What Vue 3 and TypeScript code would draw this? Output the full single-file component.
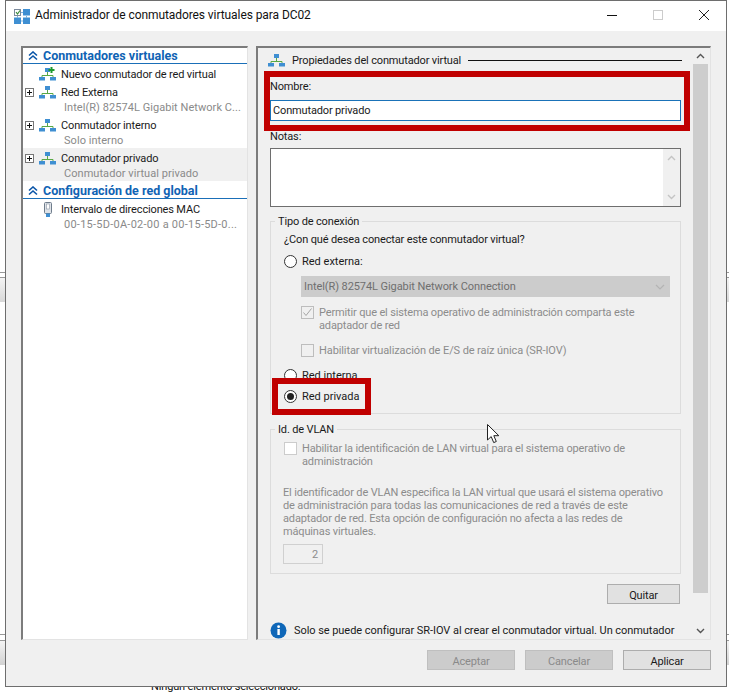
<script setup lang="ts">
interface Row {
  title: string
  sub?: string
  icon: 'new' | 'net' | 'mac'
  expand?: boolean
  selected?: boolean
}
const switches: Row[] = [
  { title: 'Nuevo conmutador de red virtual', icon: 'new' },
  { title: 'Red Externa', sub: 'Intel(R) 82574L Gigabit Network C...', icon: 'net', expand: true },
  { title: 'Conmutador interno', sub: 'Solo interno', icon: 'net', expand: true },
  { title: 'Conmutador privado', sub: 'Conmutador virtual privado', icon: 'net', expand: true, selected: true },
]
const globals: Row[] = [
  { title: 'Intervalo de direcciones MAC', sub: '00-15-5D-0A-02-00 a 00-15-5D-0...', icon: 'mac' },
]
const sections = [
  { name: 'Conmutadores virtuales', rows: switches },
  { name: 'Configuración de red global', rows: globals },
]
</script>

<template>
  <div class="page">
    <div class="behind left top-bar"></div>
    <div class="behind left bottom-bar"></div>
    <div class="behind right top-bar"></div>
    <div class="behind right bottom-bar"></div>
    <div class="behind-text">Ningún elemento seleccionado.</div>

    <div class="window">
      <header class="titlebar">
        <svg class="app-icon" width="16" height="15" viewBox="0 0 16 15">
          <rect x="0.5" y="0.5" width="6" height="6" fill="#fff" stroke="#7b8a9c" />
          <path d="M2 3l1.500 2L6 1.500" fill="none" stroke="#3c8a3c" stroke-width="1.200" />
          <rect x="9" y="0" width="7" height="6.500" fill="#3f8fd2" />
          <rect x="0" y="8.500" width="7" height="6.500" fill="#3f8fd2" />
          <rect x="9" y="8.500" width="7" height="6.500" fill="#3f8fd2" />
          <path d="M7 3.500h2M3.500 7v2M12.500 7v2M7 12h2" stroke="#7db4e0" />
        </svg>
        <span class="title">Administrador de conmutadores virtuales para DC02</span>
        <div class="controls">
          <svg width="12" height="12" viewBox="0 0 12 12"><path d="M1 6.500h10" stroke="#111" /></svg>
          <svg width="12" height="12" viewBox="0 0 12 12"><rect x="1.500" y="1.500" width="9" height="9" fill="none" stroke="#ccc" /></svg>
          <svg width="12" height="12" viewBox="0 0 12 12"><path d="M1 1l10 10M11 1L1 11" stroke="#222" /></svg>
        </div>
      </header>

      <div class="body">
        <div class="panes">
          <nav class="tree">
            <section v-for="s in sections" :key="s.name" class="tree-section">
              <h3 class="tree-head">
                <svg width="10" height="10" viewBox="0 0 10 10">
                  <path d="M1 4.500L5 1l4 3.500M1 8.500L5 5l4 3.500" fill="none" stroke="#0a55a8" stroke-width="1.600" />
                </svg>
                {{ s.name }}
              </h3>
              <div v-for="r in s.rows" :key="r.title" class="row" :class="{ selected: r.selected, single: !r.sub }">
                <div class="row-main">
                  <span class="expander">
                    <svg v-if="r.expand" width="9" height="9" viewBox="0 0 9 9">
                      <rect x="0.500" y="0.500" width="8" height="8" fill="#fff" stroke="#777" />
                      <path d="M2 4.500h5M4.500 2v5" stroke="#111" />
                    </svg>
                  </span>
                  <svg v-if="r.icon !== 'mac'" class="row-icon" width="17" height="14" viewBox="0 0 17 14">
                    <rect x="6" y="1" width="5" height="4" fill="#3f8fd2" />
                    <path d="M8.500 5v3M3 11V8.500h11V11" fill="none" stroke="#5aa845" />
                    <rect x="0" y="10" width="6" height="3.500" fill="#3f8fd2" />
                    <rect x="11" y="10" width="6" height="3.500" fill="#3f8fd2" />
                    <path v-if="r.icon === 'new'" d="M12.500 0v6M9.500 3h6" stroke="#1f9a2f" stroke-width="2" />
                  </svg>
                  <svg v-else class="row-icon" width="17" height="15" viewBox="0 0 17 15">
                    <rect x="5.500" y="0.500" width="7" height="11" rx="1" fill="#dfe3e8" stroke="#6f7d8c" />
                    <rect x="7.500" y="2" width="3" height="5" fill="#fff" stroke="#8a97a5" stroke-width="0.600" />
                    <rect x="7" y="11.500" width="4" height="3.500" fill="#3f8fd2" />
                  </svg>
                  <span class="row-title">{{ r.title }}</span>
                </div>
                <div v-if="r.sub" class="row-sub" :class="{ mac: r.icon === 'mac' }">{{ r.sub }}</div>
              </div>
            </section>
          </nav>

          <main class="props">
            <div class="props-content">
              <div class="props-head">
                <svg width="17" height="14" viewBox="0 0 17 14">
                  <rect x="6" y="1" width="5" height="4" fill="#3f8fd2" />
                  <path d="M8.500 5v3M3 11V8.500h11V11" fill="none" stroke="#5aa845" />
                  <rect x="0" y="10" width="6" height="3.500" fill="#3f8fd2" />
                  <rect x="11" y="10" width="6" height="3.500" fill="#3f8fd2" />
                </svg>
                <span>Propiedades del conmutador virtual</span>
                <i class="rule"></i>
              </div>

              <label class="lbl name-lbl">Nombre:</label>
              <div class="name-input">Conmutador privado</div>
              <label class="lbl notes-lbl">Notas:</label>
              <div class="notes">
                <div class="notes-bar">
                  <svg width="9" height="6" viewBox="0 0 9 6"><path d="M1 5l3.500-3.500L8 5" fill="none" stroke="#c4c4c4" stroke-width="1.400" /></svg>
                  <svg width="9" height="6" viewBox="0 0 9 6"><path d="M1 1l3.500 3.500L8 1" fill="none" stroke="#c4c4c4" stroke-width="1.400" /></svg>
                </div>
              </div>

              <fieldset class="group conn">
                <legend>Tipo de conexión</legend>
                <p class="ask">¿Con qué desea conectar este conmutador virtual?</p>
                <div class="radio-line first"><span class="radio"></span>Red externa:</div>
                <div class="select">
                  <span>Intel(R) 82574L Gigabit Network Connection</span>
                  <svg width="10" height="6" viewBox="0 0 10 6"><path d="M1 1l4 4 4-4" fill="none" stroke="#b4b4b4" stroke-width="1.200" /></svg>
                </div>
                <div class="check-line c1">
                  <span class="check">
                    <svg width="11" height="11" viewBox="0 0 11 11"><path d="M1.500 5.500l2.500 3L9.500 1.500" fill="none" stroke="#a5a5a5" /></svg>
                  </span>
                  <span>Permitir que el sistema operativo de administración comparta este adaptador de red</span>
                </div>
                <div class="check-line c2"><span class="check"></span><span>Habilitar virtualización de E/S de raíz única (SR-IOV)</span></div>
                <div class="radio-line r2"><span class="radio"></span>Red interna</div>
                <div class="radio-line r3"><span class="radio on"></span>Red privada</div>
              </fieldset>

              <fieldset class="group vlan">
                <legend>Id. de VLAN</legend>
                <div class="vlan-check"><span class="check big"></span><span>Habilitar la identificación de LAN virtual para el sistema operativo de administración</span></div>
                <p class="vlan-text">El identificador de VLAN especifica la LAN virtual que usará el sistema operativo de administración para todas las comunicaciones de red a través de este adaptador de red. Esta opción de configuración no afecta a las redes de máquinas virtuales.</p>
                <div class="spin">2</div>
              </fieldset>

              <div class="quit-row"><button class="btn">Quitar</button></div>

              <div class="info">
                <svg width="17" height="17" viewBox="0 0 17 17">
                  <circle cx="8.500" cy="8.500" r="8" fill="#0f67b8" />
                  <rect x="7.400" y="7" width="2.400" height="6" fill="#fff" />
                  <circle cx="8.600" cy="4.700" r="1.400" fill="#fff" />
                </svg>
                <span>Solo se puede configurar SR-IOV al crear el conmutador virtual. Un conmutador externo con SR-IOV habilitado no se puede convertir.</span>
              </div>

              <div class="mark mark-name"></div>
              <div class="mark mark-radio"></div>
            </div>

            <div class="scroll">
              <svg width="9" height="6" viewBox="0 0 9 6"><path d="M1 5l3.500-3.500L8 5" fill="none" stroke="#555" stroke-width="1.400" /></svg>
              <div class="thumb"></div>
              <svg width="9" height="6" viewBox="0 0 9 6"><path d="M1 1l3.500 3.500L8 1" fill="none" stroke="#555" stroke-width="1.400" /></svg>
            </div>
          </main>
        </div>

        <footer class="actions">
          <button class="btn wide off">Aceptar</button>
          <button class="btn wide off">Cancelar</button>
          <button class="btn wide">Aplicar</button>
        </footer>
      </div>
    </div>

    <svg class="cursor" width="13" height="20" viewBox="0 0 13 20">
      <path d="M0.500 0.500V16l3.700-3.400 2.500 6 2.600-1.100-2.500-5.800h5L0.500 0.500z" fill="#fff" stroke="#222" stroke-width="1" stroke-linejoin="round" />
    </svg>
  </div>
</template>

<style>
html, body { margin: 0; background: #fff; }
</style>

<style scoped>
.page {
  position: relative;
  width: 729px;
  height: 693px;
  overflow: hidden;
  background: #fff;
  font: 11px/13px Roboto, "Noto Sans", sans-serif;
  letter-spacing: -0.15px;
  color: #1a1a1a;
}
.cursor { position: absolute; left: 487px; top: 424px; }
.behind { position: absolute; box-sizing: border-box; border-top: 1px solid #999; }
.behind.left { left: 0; width: 5px; }
.behind.right { right: 0; width: 3px; }
.top-bar {
  top: 272px;
  height: 30px;
  background: linear-gradient(#fff 0 4px, #999 4px 5px, #f4f4f4 5px, #d8d8d8);
}
.bottom-bar {
  top: 634px;
  height: 31px;
  background: linear-gradient(#fff 0 5px, #999 5px 6px, #f4f4f4 6px, #d2d2d2);
}
.behind-text { position: absolute; left: 151px; top: 680px; color: #111; }

.window {
  position: absolute;
  left: 5px;
  top: 0;
  width: 722px;
  height: 687px;
  box-sizing: border-box;
  border: 1px solid #6e6e6e;
  background: #f0f0f0;
  display: flex;
  flex-direction: column;
}
.titlebar {
  height: 30px;
  flex: none;
  background: #fff;
  display: flex;
  align-items: center;
  padding: 0 0 0 8px;
}
.app-icon { margin-right: 5px; }
.title { font-size: 12px; color: #111; margin-top: -1px; letter-spacing: -0.08px; }
.controls {
  margin-left: auto;
  display: flex;
  gap: 34px;
  padding-right: 16px;
  margin-top: -2px;
}

.body { flex: 1; display: flex; flex-direction: column; padding: 15px 15px 0; min-height: 0; }
.panes { display: flex; gap: 8px; height: 594px; flex: none; }

.tree {
  width: 227px;
  box-sizing: border-box;
  background: #fff;
  border: 1px solid #e3e3e3;
  border-top: 2px solid #7c7c7c;
  border-left: 2px solid #7c7c7c;
  flex: none;
}
.tree-section + .tree-section { margin-top: 2px; }
.tree-head {
  margin: 0;
  height: 16px;
  box-sizing: border-box;
  border-bottom: 1px solid #1a6fb8;
  padding: 0 0 0 5px;
  display: flex;
  align-items: center;
  gap: 5px;
  font-size: 12.5px;
  font-weight: 700;
  letter-spacing: 0;
  color: #0f63b4;
}
.row { height: 33px; box-sizing: border-box; padding-top: 2px; }
.row.single { height: 18px; }
.row.selected { background: #f0f0f0; }
.row-main { display: flex; align-items: center; height: 16px; }
.expander { width: 9px; height: 9px; margin-left: 2px; display: flex; }
.row-icon { margin-left: 5px; margin-right: 5px; flex: none; }
.row-title { white-space: nowrap; color: #1a1a1a; }
.row-sub { color: #8a8a8a; padding-left: 41px; white-space: nowrap; line-height: 15px; letter-spacing: 0.05px; }
.row-sub.mac { letter-spacing: 0.25px; }

.props {
  flex: 1;
  min-width: 0;
  box-sizing: border-box;
  border: 1px solid #e3e3e3;
  border-top: 2px solid #7c7c7c;
  border-left: 2px solid #7c7c7c;
  display: flex;
  overflow: hidden;
}
.props-content {
  position: relative;
  width: 435px;
  flex: none;
  padding-left: 12px;
  box-sizing: border-box;
}
.props-head {
  display: flex;
  align-items: center;
  height: 14px;
  margin-top: 5px;
  margin-left: -2px;
  padding-right: 11px;
  gap: 7px;
}
.rule { flex: 1; height: 1px; background: #111; }
.lbl { display: block; }
.name-lbl { margin-top: 13px; }
.name-input {
  margin-top: 7px;
  width: 411px;
  height: 21px;
  box-sizing: border-box;
  border: 1px solid #1a72b8;
  background: #fff;
  line-height: 20px;
  padding-left: 2px;
}
.notes-lbl { margin-top: 9px; }
.notes {
  margin-top: 5px;
  width: 411px;
  height: 59px;
  box-sizing: border-box;
  border: 1px solid #6e6e6e;
  background: #fff;
  display: flex;
  justify-content: flex-end;
}
.notes-bar {
  width: 17px;
  background: #f0f0f0;
  display: flex;
  flex-direction: column;
  align-items: center;
  justify-content: space-between;
  padding: 6px 0;
  box-sizing: border-box;
}
.group {
  margin: 0;
  width: 411px;
  box-sizing: border-box;
  border: 1px solid #dcdcdc;
  padding: 0 0 0 13px;
  min-width: 0;
}
.group legend { padding: 0 3px; margin-left: -9px; line-height: 13px; color: #1a1a1a; }
.conn { margin-top: 8px; height: 199px; }
.ask { margin: 5px 0 0; }
.radio-line { display: flex; align-items: center; gap: 5px; height: 14px; letter-spacing: 0; }
.radio {
  width: 13px;
  height: 13px;
  box-sizing: border-box;
  border: 1px solid #333;
  border-radius: 50%;
  background: #fff;
  display: flex;
  align-items: center;
  justify-content: center;
  flex: none;
}
.radio.on::after { content: ""; width: 7px; height: 7px; border-radius: 50%; background: #222; }
.first { margin-top: 8px; }
.select {
  margin: 8px 0 0 17px;
  width: 369px;
  height: 21px;
  background: #ccc;
  color: #6f6f6f;
  display: flex;
  align-items: center;
  justify-content: space-between;
  padding: 0 5px 0 3px;
  box-sizing: border-box;
  letter-spacing: -0.08px;
}
.check-line { display: flex; gap: 5px; margin-left: 17px; width: 345px; color: #8c8c8c; }
.c1 { margin-top: 9px; }
.c2 { margin-top: 12px; letter-spacing: -0.1px; }
.check {
  width: 13px;
  height: 13px;
  box-sizing: border-box;
  border: 1px solid #bdbdbd;
  background: #f0f0f0;
  flex: none;
  display: flex;
}
.check.big { background: #fff; border-color: #ccc; }
.r2 { margin-top: 11px; }
.r3 { margin-top: 7px; }
.vlan { margin-top: 9px; height: 151px; }
.vlan-check { display: flex; gap: 5px; margin-top: 6px; width: 380px; color: #8c8c8c; }
.vlan-text { margin: 18px 0 0 -1px; width: 385px; color: #8c8c8c; }
.spin {
  margin: 6px 0 0 -1px;
  width: 40px;
  height: 20px;
  box-sizing: border-box;
  border: 1px solid #d0d0d0;
  text-align: right;
  padding: 3px 4px 0 0;
  color: #8c8c8c;
}
.quit-row { width: 410px; display: flex; justify-content: flex-end; margin-top: 10px; }
.btn {
  width: 73px;
  height: 20px;
  box-sizing: border-box;
  background: #e1e1e1;
  border: 1px solid #adadad;
  font: inherit;
  letter-spacing: inherit;
  color: #1a1a1a;
  padding: 2px 0 0;
}
.info { display: flex; gap: 7px; margin-top: 18px; width: 412px; letter-spacing: -0.06px; }
.info svg { flex: none; }
.info span { margin-top: 2px; }
.mark { position: absolute; border: 6px solid #c00000; box-sizing: border-box; pointer-events: none; }
.mark-name { left: 6px; top: 23px; width: 426px; height: 60px; }
.mark-radio { left: 14px; top: 330px; width: 99px; height: 37px; }

.scroll {
  width: 15px;
  background: #f0f0f0;
  display: flex;
  flex-direction: column;
  align-items: center;
  padding-top: 5px;
  box-sizing: border-box;
}
.thumb { width: 15px; height: 529px; background: #cdcdcd; margin: 5px 0 35px; }

.actions {
  display: flex;
  justify-content: flex-end;
  gap: 10px;
  padding-top: 10px;
}
.wide { width: 88px; }
.off { background: #ccc; border-color: #bfbfbf; color: #8a8a8a; }
</style>
